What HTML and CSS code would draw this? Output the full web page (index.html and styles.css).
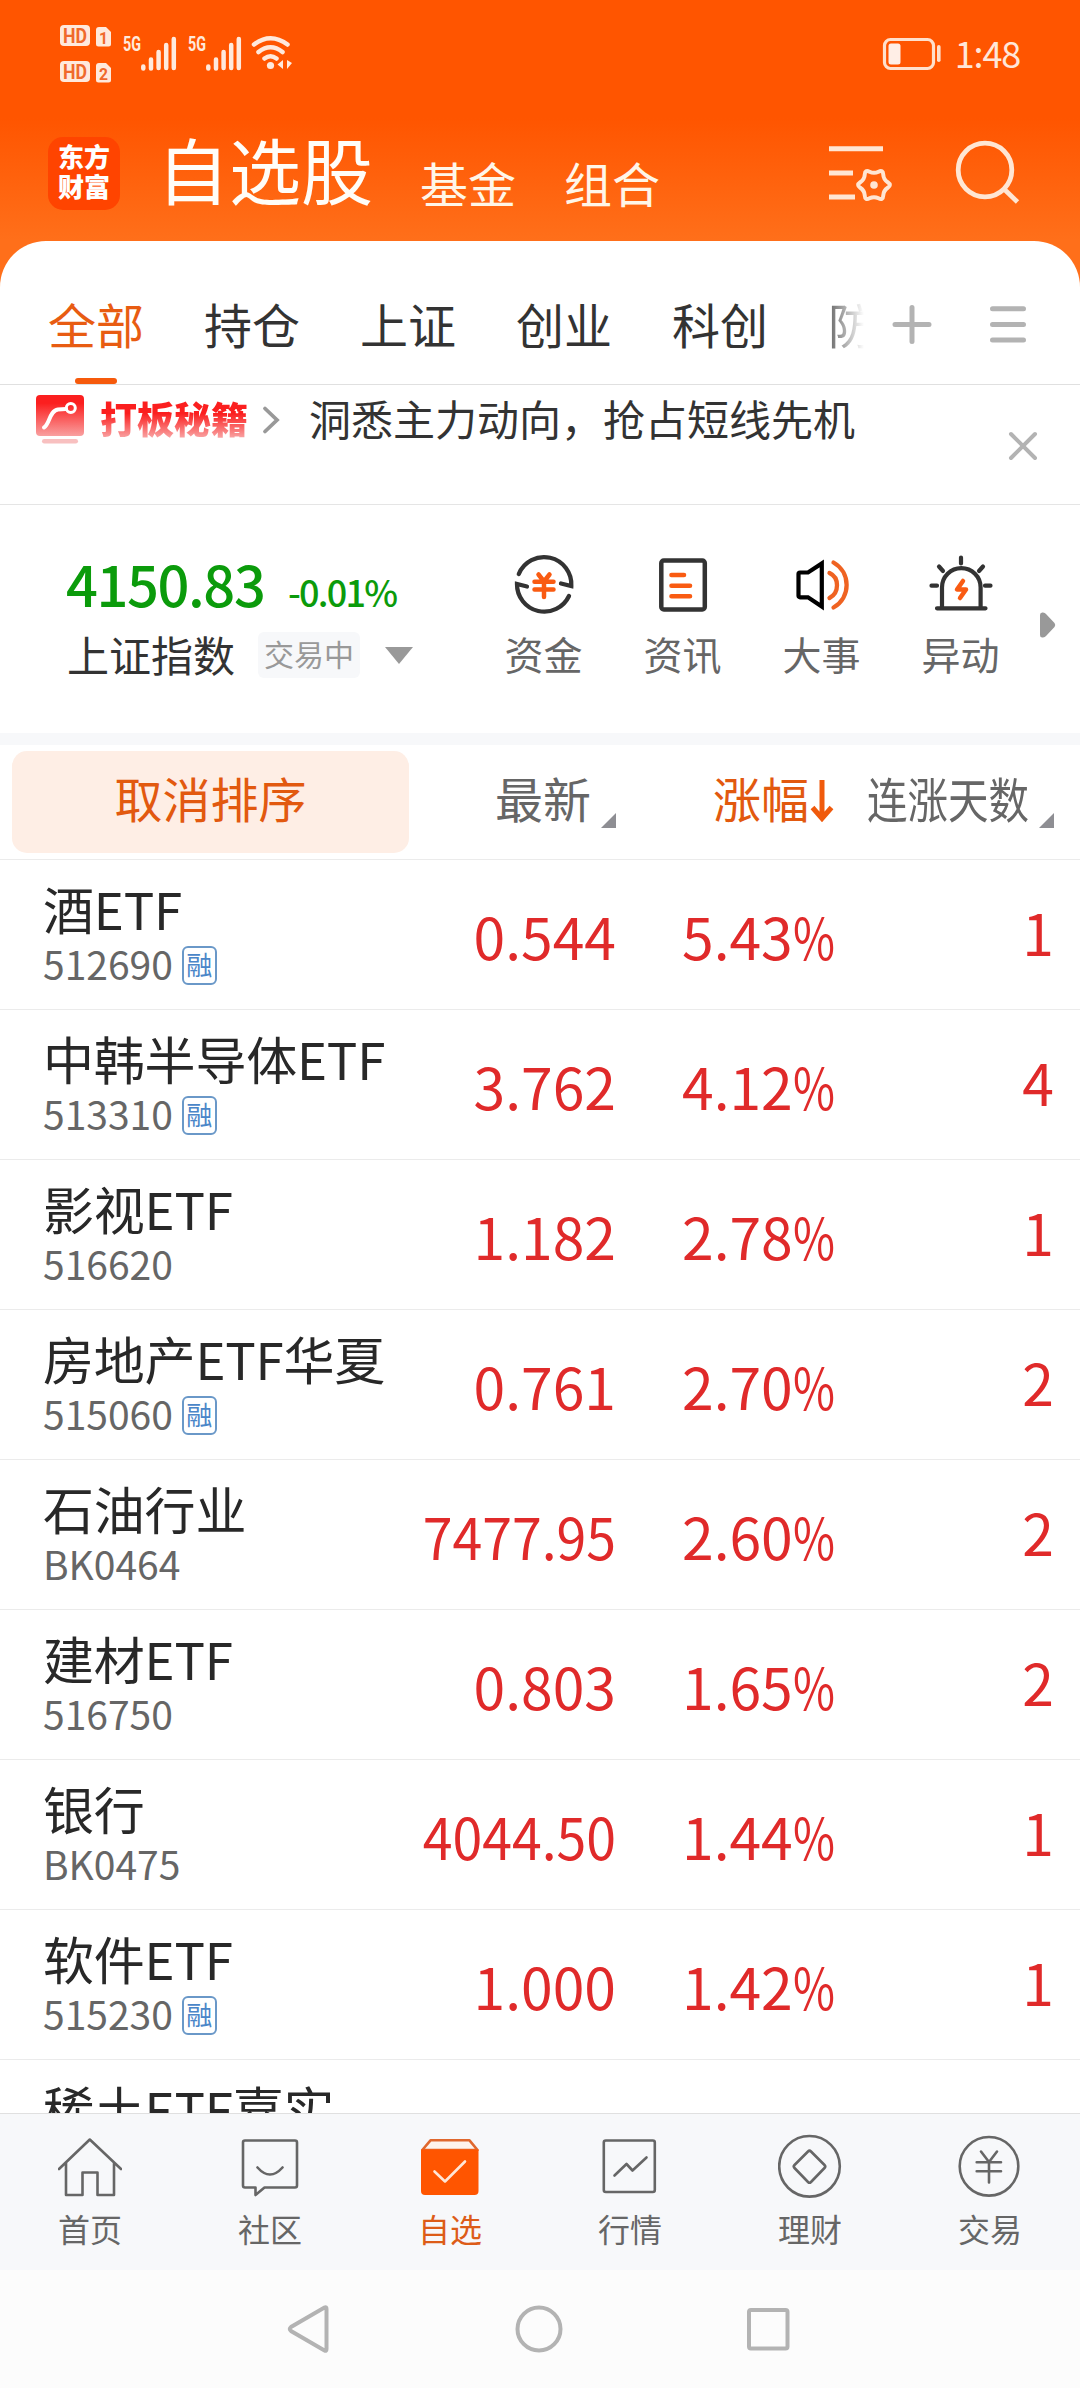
FILE: index.html
```html
<!DOCTYPE html>
<html lang="zh-CN">
<head>
  <meta charset="UTF-8" />
  <meta name="viewport" content="width=device-width, initial-scale=1.0" />
  <title>自选股</title>
  <link rel="stylesheet" href="styles.css">
</head>
<body>
  <div class="app">
    <header class="header">
      <div class="status">
        <svg class="status-left" width="240" height="70" viewBox="58 20 240 70">
          <g fill="#ffe9dc">
            <rect x="60" y="25" width="30" height="21" rx="4"/>
            <path d="M99 27h7l5 5v12a2.500 2.500 0 0 1-2.500 2.500H98.500A2.500 2.500 0 0 1 96 44V30a3 3 0 0 1 3-3z"/>
            <rect x="60" y="61" width="30" height="21" rx="4"/>
            <path d="M99 63h7l5 5v12a2.500 2.500 0 0 1-2.500 2.500H98.500A2.500 2.500 0 0 1 96 80V66a3 3 0 0 1 3-3z"/>
          </g>
          <g class="hd">
            <text x="63" y="42.500" textLength="24" lengthAdjust="spacingAndGlyphs">HD</text>
            <text x="63" y="78.500" textLength="24" lengthAdjust="spacingAndGlyphs">HD</text>
            <text x="99" y="43.500" font-size="17" textLength="9" lengthAdjust="spacingAndGlyphs">1</text>
            <text x="99" y="79.500" font-size="17" textLength="9" lengthAdjust="spacingAndGlyphs">2</text>
          </g>
          <g class="net">
            <text x="123" y="51" textLength="18" lengthAdjust="spacingAndGlyphs">5G</text>
            <text x="188" y="51" textLength="18" lengthAdjust="spacingAndGlyphs">5G</text>
          </g>
          <g stroke="#ffe9dc" stroke-width="4.500" stroke-linecap="round">
            <path d="M143.300 66.500v2M151 59.500v9M158.600 52v16M166.200 45v23M173.800 39v29"/>
            <path d="M208.300 66.500v2M216 59.500v9M223.600 52v16M231.200 45v23M238.800 39v29"/>
          </g>
          <g fill="none" stroke="#ffe9dc" stroke-width="4.500" stroke-linecap="round">
            <path d="M254 44.500q16.500-12.500 33.500 0M258.500 52q12-9.500 24 0M264.500 58.500q6-4.500 12 0"/>
          </g>
          <circle cx="270.500" cy="65.500" r="3.600" fill="#ffe9dc"/>
          <path d="M283 60v9l-5.500-4.500zM287 60v9l5-6z" fill="#ffe9dc"/>
        </svg>
        <div class="status-right">
          <svg width="58" height="36" viewBox="0 0 58 36">
            <rect x="3.500" y="3.500" width="49" height="29" rx="6" fill="none" stroke="#ffe0cc" stroke-width="3.200"/>
            <rect x="7.500" y="7.500" width="12" height="21" rx="2.500" fill="#ffeee6"/>
            <rect x="56" y="9" width="3.600" height="17" rx="1.800" fill="#ffe0cc"/>
          </svg>
          <span class="time">1:48</span>
        </div>
      </div>
      <div class="topbar">
        <div class="logo">东方<br>财富</div>
        <h1>自选股</h1>
        <span class="top-link">基金</span>
        <span class="top-link">组合</span>
        <div class="top-icons">
          <svg width="70" height="70" viewBox="828 138 70 70" fill="none" stroke="#ffe6d3" stroke-width="5">
            <path d="M831 148.800h54M831 173h24M831 197h26"/>
            <path transform="translate(876 185)" stroke-width="4" d="M13.750-2.750Q18 0 13.750 2.750Q9.500 5.500 9.250 10.500Q9 15.600 4.500 13.300Q0 11-4.500 13.300Q-9 15.600-9.250 10.500Q-9.500 5.500-13.750 2.750Q-18 0-13.750-2.750Q-9.500-5.500-9.250-10.500Q-9-15.600-4.500-13.300Q0-11 4.500-13.300Q9-15.600 9.250-10.500Q9.500-5.500 13.750-2.750z"/>
            <circle cx="876" cy="185" r="3.800" fill="#ffe6d3" stroke="none"/>
          </svg>
          <svg width="70" height="70" viewBox="955 138 70 70" fill="none" stroke="#ffe6d3" stroke-width="4.800">
            <circle cx="987" cy="170" r="26.800"/>
            <path d="M1006 189l13.500 13"/>
          </svg>
        </div>
      </div>
    </header>

    <main class="panel">
      <nav class="tabs">
        <div class="tab-scroll">
          <span class="tab active">全部</span>
          <span class="tab">持仓</span>
          <span class="tab">上证</span>
          <span class="tab">创业</span>
          <span class="tab">科创</span>
          <span class="tab fade">防</span>
        </div>
        <svg class="tab-icons" width="140" height="44" viewBox="890 302 140 44" stroke="#b3b3b3" stroke-width="5" stroke-linecap="round">
          <path d="M895 324.500h34M912 307.500v34M992.500 308.800h31M992.500 324.500h31M992.500 340h31"/>
        </svg>
      </nav>

      <div class="banner">
        <svg width="48" height="50" viewBox="0 0 48 50">
          <defs>
            <linearGradient id="red" x1="0" y1="0" x2="0" y2="1">
              <stop offset=".2" stop-color="#fb1f1f"/>
              <stop offset="1" stop-color="#f9a0a0"/>
            </linearGradient>
          </defs>
          <rect width="48" height="41" rx="4" fill="url(#red)"/>
          <path d="M8 32.500C14 29 13 16 22 14.500L30 14" fill="none" stroke="#fff" stroke-width="4" stroke-linecap="round"/>
          <circle cx="34.800" cy="13" r="4.500" fill="none" stroke="#fff" stroke-width="3"/>
          <rect x="6" y="44" width="36" height="4.500" rx="2.200" fill="#f8c0c0"/>
        </svg>
        <strong>打板秘籍</strong>
        <svg class="chevron" width="18" height="30" viewBox="0 0 18 30" fill="none" stroke="#999" stroke-width="3.800" stroke-linecap="round">
          <path d="M3 3.500l12 11.500L3 26.500"/>
        </svg>
        <span class="slogan">洞悉主力动向，抢占短线先机</span>
        <svg class="close" width="30" height="30" viewBox="0 0 30 30" stroke="#b3b3b3" stroke-width="4" stroke-linecap="round">
          <path d="M3 3l24 24M27 3L3 27"/>
        </svg>
      </div>

      <section class="market">
        <div class="index">
          <div class="index-price">
            <b>4150.83</b>
            <span>-0.01%</span>
          </div>
          <div class="index-name">
            <span>上证指数</span>
            <em>交易中</em>
            <i class="caret"></i>
          </div>
        </div>
        <div class="quick">
          <div class="quick-item">
            <svg width="64" height="64" viewBox="0 0 64 64" fill="none" stroke="#333" stroke-width="4.300">
              <path d="M6.800 21A27.300 27.300 0 0 1 59.300 33L49 30.500M57 43A27.300 27.300 0 0 1 5 31L15 33.500" stroke-linecap="round"/>
              <path d="M26.500 21.500l5.500 7 5.500-7M22.500 28.700h19M22.500 36.500h19M32 28v16" stroke="#f95b12" stroke-width="4.500" stroke-linecap="round"/>
            </svg>
            <span>资金</span>
          </div>
          <div class="quick-item">
            <svg width="64" height="64" viewBox="0 0 64 64" fill="none" stroke="#333" stroke-width="4.500">
              <rect x="10.300" y="7.500" width="43.500" height="49" rx="2.500"/>
              <path d="M20.500 22H33M20.500 32.700h18.500M20.500 43.300h18.500" stroke="#f95b12" stroke-width="4.600" stroke-linecap="round"/>
            </svg>
            <span>资讯</span>
          </div>
          <div class="quick-item">
            <svg width="64" height="64" viewBox="0 0 64 64" fill="none" stroke="#000" stroke-width="4.200">
              <path d="M31.800 10.500v43L18 44.300H10a1.500 1.500 0 0 1-1.500-1.500V21A1.500 1.500 0 0 1 10 19.500h8z"/>
              <path d="M39.500 20c10 4.500 10 20 0 25M43.500 9.500c17.500 10 17.500 35 0 45" stroke="#ef6322" stroke-width="4.300" stroke-linecap="round"/>
            </svg>
            <span>大事</span>
          </div>
          <div class="quick-item">
            <svg width="64" height="64" viewBox="0 0 64 64" fill="none" stroke="#333" stroke-width="4.200" stroke-linecap="round">
              <path d="M13 55V34.500a19.300 19.300 0 0 1 38.600 0V55M8 55.300h48.500M32 4.500v6M2.500 32.700h5.500M56 32.700h5.500M10 13.500l4 4.500M54 13.500l-4 4.500"/>
              <path d="M34 28l-6 8.500h9L31 45" stroke="#f95b12" stroke-width="4.500" stroke-linejoin="round"/>
            </svg>
            <span>异动</span>
          </div>
        </div>
        <svg class="more" width="16" height="26" viewBox="0 0 16 26" fill="#999">
          <path d="M0 3q0-3 3-2.500 2 .3 3 1.500l8.500 9q1.500 2 0 4L6 24q-1 1.200-3 1.500-3 .5-3-2.500z"/>
        </svg>
      </section>

      <div class="list-head">
        <button class="reset">取消排序</button>
        <span class="col">最新<i class="corner"></i></span>
        <span class="col sorted">涨幅<svg width="24" height="44" viewBox="0 0 24 44" fill="none" stroke="#f05a0c" stroke-width="5">
          <path d="M12 1v38M2.500 28.500L12 39.500l9.500-11"/>
        </svg></span>
        <span class="col days"><span class="narrow">连涨天数</span><i class="corner"></i></span>
      </div>

      <div class="list">
        <div class="row">
          <div class="stock"><h3>酒ETF</h3><p>512690<em>融</em></p></div>
          <span class="price">0.544</span>
          <span class="rate">5.43<i>%</i></span>
          <span class="count">1</span>
        </div>
        <div class="row">
          <div class="stock"><h3>中韩半导体ETF</h3><p>513310<em>融</em></p></div>
          <span class="price">3.762</span>
          <span class="rate">4.12<i>%</i></span>
          <span class="count">4</span>
        </div>
        <div class="row">
          <div class="stock"><h3>影视ETF</h3><p>516620</p></div>
          <span class="price">1.182</span>
          <span class="rate">2.78<i>%</i></span>
          <span class="count">1</span>
        </div>
        <div class="row">
          <div class="stock"><h3>房地产ETF华夏</h3><p>515060<em>融</em></p></div>
          <span class="price">0.761</span>
          <span class="rate">2.70<i>%</i></span>
          <span class="count">2</span>
        </div>
        <div class="row">
          <div class="stock"><h3>石油行业</h3><p>BK0464</p></div>
          <span class="price long">7477.95</span>
          <span class="rate">2.60<i>%</i></span>
          <span class="count">2</span>
        </div>
        <div class="row">
          <div class="stock"><h3>建材ETF</h3><p>516750</p></div>
          <span class="price">0.803</span>
          <span class="rate">1.65<i>%</i></span>
          <span class="count">2</span>
        </div>
        <div class="row">
          <div class="stock"><h3>银行</h3><p>BK0475</p></div>
          <span class="price long">4044.50</span>
          <span class="rate">1.44<i>%</i></span>
          <span class="count">1</span>
        </div>
        <div class="row">
          <div class="stock"><h3>软件ETF</h3><p>515230<em>融</em></p></div>
          <span class="price">1.000</span>
          <span class="rate">1.42<i>%</i></span>
          <span class="count">1</span>
        </div>
        <div class="row">
          <div class="stock"><h3>稀土ETF嘉实</h3></div>
        </div>
      </div>
    </main>

    <footer class="tabbar">
      <div class="tabbar-item">
        <svg width="64" height="64" viewBox="0 0 64 64"><path d="M1 35L31.800 5.500 63 35M8 29v32h16.500V38.500h15V61H56V29"/></svg>
        <span>首页</span>
      </div>
      <div class="tabbar-item">
        <svg width="64" height="64" viewBox="0 0 64 64"><path d="M7 6.500h50q2 0 2 2v43q0 2-2 2H26.500L17.500 61v-7.500H7q-2 0-2-2v-43q0-2 2-2zM19.500 33.500q12.500 14 25 0"/></svg>
        <span>社区</span>
      </div>
      <div class="tabbar-item active">
        <svg width="64" height="64" viewBox="0 0 64 64">
          <path d="M4.300 16L12.500 6.300h39L59.500 16z" fill="#fef3ec" stroke="#e0682e"/>
          <path d="M3 15.500h57.500V57q0 4-4 4H7q-4 0-4-4z" fill="#f50" stroke="none"/>
          <path d="M16.500 37.500L27 47.500 47 27.500" stroke="#ffe6d6"/>
        </svg>
        <span>自选</span>
      </div>
      <div class="tabbar-item">
        <svg width="64" height="64" viewBox="0 0 64 64"><rect x="5.800" y="6.500" width="51" height="51.500" rx="2"/><path d="M16.500 41.500L28.500 30l6 6.500 14-13"/></svg>
        <span>行情</span>
      </div>
      <div class="tabbar-item">
        <svg width="64" height="64" viewBox="0 0 64 64"><circle cx="31.500" cy="32.300" r="30.300"/><path d="M30 17.500q1.500-1.500 3 0l13.500 13.500q1.500 1.500 0 3L33 48q-1.500 1.500-3 0L16.500 34q-1.500-1.500 0-3z"/></svg>
        <span>理财</span>
      </div>
      <div class="tabbar-item">
        <svg width="64" height="64" viewBox="0 0 64 64"><circle cx="31" cy="32.300" r="29.300"/><path d="M23 17.500l8 10.500 8-10.500M18.700 28.300H43M18.700 37.300H43M31 28v20.500"/></svg>
        <span>交易</span>
      </div>
    </footer>

    <div class="sysnav">
      <svg width="44" height="52" viewBox="0 0 44 52"><path d="M38.500 4.500q2-1 2 1.500v40q0 2.500-2 1.500L5 28q-2.500-2 0-4z"/></svg>
      <svg width="50" height="52" viewBox="0 0 50 52"><circle cx="26" cy="26" r="21.500"/></svg>
      <svg width="46" height="52" viewBox="0 0 46 52"><rect x="3" y="7" width="38.500" height="38.500" rx="2"/></svg>
    </div>
  </div>
</body>
</html>
```
FILE: styles.css
```css
* {
  box-sizing: border-box;
}

body {
  margin: 0;
  font-family: 'Noto Sans CJK SC', sans-serif;
  background: #fff;
  color: #333;
}

h1, h3, p {
  margin: 0;
  font-weight: 400;
}

em, i {
  font-style: normal;
}

svg {
  display: block;
  flex-shrink: 0;
}

.app {
  width: 1080px;
  height: 2388px;
  display: flex;
  flex-direction: column;
  overflow: hidden;
}

/* header */
.header {
  height: 300px;
  flex-shrink: 0;
  background: linear-gradient(#ff5500 118px, #ff6f1a 240px);
}

.status {
  height: 110px;
  padding: 20px 60px 0 58px;
  display: flex;
  justify-content: space-between;
}

.hd {
  fill: #f0692c;
  font-family: Roboto, sans-serif;
  font-size: 20px;
  font-weight: 700;
}

.net {
  fill: #ffe9dc;
  font-family: Roboto, sans-serif;
  font-size: 21px;
  font-weight: 700;
}

.status-right {
  height: 68px;
  display: flex;
  align-items: center;
  gap: 16px;
}

.status-right svg {
  overflow: visible;
}

.time {
  color: #ffe6d8;
  font-size: 36px;
  line-height: 40px;
  padding-bottom: 4px;
  letter-spacing: -1.2px;
}

.topbar {
  height: 131px;
  padding: 0 57px 0 48px;
  display: flex;
}

.logo {
  width: 72px;
  height: 73px;
  margin: 27px 37px 0 0;
  padding-top: 4px;
  border-radius: 15px;
  background: #ff4400;
  color: #fff;
  font-size: 26px;
  font-weight: 900;
  line-height: 30px;
  text-align: center;
}

.topbar h1 {
  margin-right: 47px;
  font-size: 72px;
  line-height: 70px;
  padding-top: 23px;
  color: #fffdf8;
}

.top-link {
  margin-right: 48px;
  padding-top: 47px;
  font-size: 48px;
  line-height: 50px;
  color: #fff6e8;
}

.top-icons {
  margin-left: auto;
  padding-top: 28px;
  display: flex;
  gap: 57px;
}

/* white panel */
.panel {
  flex: 1;
  min-height: 0;
  margin-top: -59px;
  display: flex;
  flex-direction: column;
  border-radius: 46px 46px 0 0;
  background: #fff;
}

.tabs {
  height: 144px;
  flex-shrink: 0;
  padding: 0 50px 0 48px;
  display: flex;
  justify-content: space-between;
  border-bottom: 1px solid #e0e0e0;
}

.tab-scroll {
  width: 816px;
  display: flex;
  gap: 60px;
  overflow: hidden;
}

.tab {
  position: relative;
  flex-shrink: 0;
  height: 143px;
  padding-top: 57px;
  font-size: 48px;
  line-height: 50px;
}

.tab.active {
  color: #e85c12;
}

.tab.active::after {
  content: '';
  position: absolute;
  left: 27px;
  bottom: 0;
  width: 42px;
  height: 6px;
  border-radius: 3px;
  background: #f65a0c;
}

.tab.fade {
  background: linear-gradient(90deg, #666, #fff 36px);
  -webkit-background-clip: text;
  background-clip: text;
  color: transparent;
}

.tab-icons {
  margin-top: 61px;
}

.banner {
  height: 120px;
  flex-shrink: 0;
  padding: 10px 42px 0 36px;
  display: flex;
  border-bottom: 1px solid #e5e5e5;
}

.banner strong {
  margin-left: 16px;
  height: 46px;
  font-size: 37px;
  font-weight: 900;
  line-height: 46px;
  background: linear-gradient(#fb1f1f 40%, #f9a0a0 92%);
  -webkit-background-clip: text;
  background-clip: text;
  color: transparent;
}

.chevron {
  margin: 10px 0 0 14px;
}

.slogan {
  margin-left: 29px;
  font-size: 42px;
  line-height: 46px;
}

.close {
  margin: 36px 0 0 auto;
}

/* index and shortcuts */
.market {
  height: 240px;
  flex-shrink: 0;
  padding: 48px 24px 0 67px;
  display: flex;
  border-bottom: 12px solid #f7f8fa;
}

.index {
  width: 408px;
}

.index-price {
  height: 62px;
  display: flex;
  align-items: baseline;
  color: #0b9b0b;
  line-height: 60px;
}

.index-price b {
  margin-left: -1px;
  width: 222px;
  font-size: 56px;
  font-weight: 500;
  letter-spacing: -1.4px;
}

.index-price span {
  font-size: 36px;
  font-weight: 500;
  letter-spacing: -1.8px;
}

.index-name {
  margin-top: 17px;
  height: 46px;
  display: flex;
  align-items: center;
  font-size: 42px;
  line-height: 46px;
}

.index-name span {
  padding-bottom: 2px;
}

.index-name em {
  margin-left: 23px;
  width: 102px;
  height: 46px;
  border-radius: 6px;
  background: #f7f8fa;
  color: #999;
  font-size: 30px;
  line-height: 43px;
  text-align: center;
}

.caret {
  margin-left: 25px;
  border: solid transparent;
  border-width: 17px 14px 0;
  border-top-color: #999;
}

.quick {
  display: flex;
}

.quick-item {
  width: 139px;
  display: flex;
  flex-direction: column;
  align-items: center;
  font-size: 39px;
  line-height: 46px;
  color: #666;
}

.quick-item span {
  margin-top: 13px;
}

.more {
  margin: 59px 0 0 10px;
}

/* table */
.list-head {
  height: 115px;
  flex-shrink: 0;
  padding: 6px 26px 6px 12px;
  display: flex;
  border-bottom: 1px solid #ebebeb;
  font-size: 48px;
  line-height: 93px;
  color: #666;
}

.reset {
  width: 397px;
  height: 102px;
  padding: 0 0 9px;
  border: 0;
  border-radius: 15px;
  background: #feeee5;
  color: #e2590f;
  font: inherit;
}

.col {
  display: flex;
}

.col:nth-child(2) {
  width: 207px;
  justify-content: flex-end;
}

.corner {
  align-self: flex-end;
  margin: 0 0 25px 10px;
  border: solid transparent;
  border-width: 0 0 15px 15px;
  border-bottom-color: #8e8e93;
}

.sorted {
  width: 218px;
  justify-content: flex-end;
  color: #e2590f;
}

.sorted svg {
  margin: 28px 0 0 1px;
}

.days {
  flex: 1;
  justify-content: flex-end;
}

.narrow {
  width: 162px;
  white-space: nowrap;
  transform: scaleX(0.844);
  transform-origin: left;
}

.list {
  flex: 1;
  min-height: 0;
  overflow: hidden;
}

.row {
  height: 150px;
  padding: 0 26px 0 43px;
  display: grid;
  grid-template-columns: 353px 220px 218px 1fr;
  border-bottom: 1px solid #ebebeb;
  font-size: 57px;
  line-height: 150px;
  color: #e02a2a;
  white-space: nowrap;
}

.stock {
  padding-top: 19px;
}

.stock h3 {
  color: #282828;
  font-size: 51px;
  line-height: 58px;
  letter-spacing: -0.2px;
}

.stock p {
  display: flex;
  align-items: center;
  color: #666;
  font-size: 39px;
  line-height: 52px;
}

.stock em {
  width: 35px;
  height: 39px;
  margin: 5px 0 0 9px;
  border: 2px solid #6a98c8;
  border-radius: 6px;
  color: #4a86c8;
  font-size: 26px;
  line-height: 32px;
  display: flex;
  justify-content: center;
}

.price {
  text-align: right;
}

.price.long {
  transform: scaleX(0.94);
  transform-origin: right;
}

.rate {
  padding-left: 66px;
}

.rate i {
  display: inline-block;
  transform: scaleX(0.8);
  transform-origin: left;
}

.count {
  text-align: right;
  line-height: 142px;
}

/* bottom bars */
.tabbar {
  height: 157px;
  flex-shrink: 0;
  padding-top: 20px;
  display: grid;
  grid-template-columns: repeat(6, 1fr);
  background: #f7f8fa;
  border-top: 1px solid #e0e0e0;
}

.tabbar-item {
  display: flex;
  flex-direction: column;
  align-items: center;
  font-size: 32px;
  line-height: 40px;
  color: #666;
}

.tabbar-item svg {
  fill: none;
  stroke: #666;
  stroke-width: 2.6px;
  stroke-linecap: round;
  stroke-linejoin: round;
}

.tabbar-item span {
  margin-top: 10px;
}

.tabbar-item.active {
  color: #dd5c18;
}

.sysnav {
  height: 118px;
  flex-shrink: 0;
  padding: 33px 288px 0 286px;
  display: flex;
  justify-content: space-between;
  background: #fcfcfc;
}

.sysnav svg {
  fill: none;
  stroke: #b3b3b3;
  stroke-width: 4px;
}
```
